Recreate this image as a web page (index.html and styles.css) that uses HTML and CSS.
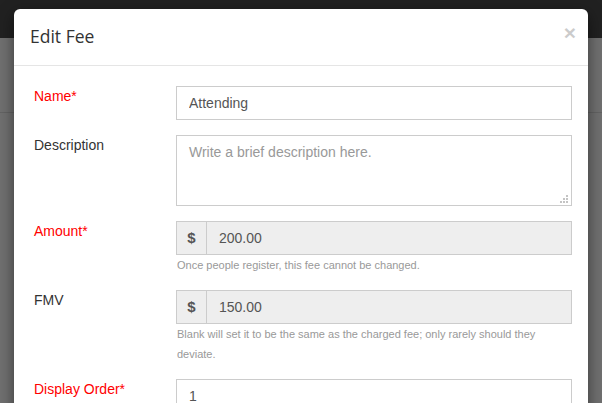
FILE: index.html
```html
<!DOCTYPE html>
<html lang="en">
<head>
<meta charset="utf-8">
<title>Edit Fee</title>
<link rel="stylesheet" href="styles.css">
</head>
<body>
  <div class="navbar"></div>
  <div class="page">
    <div class="page-row"></div>
  </div>

  <div class="modal">
    <div class="modal-header">
      <h4 class="modal-title">Edit Fee</h4>
      <button class="close" type="button">&times;</button>
    </div>
    <form class="modal-body">
      <div class="form-group">
        <label class="control-label required">Name*</label>
        <div class="control">
          <input class="form-control" type="text" value="Attending">
        </div>
      </div>

      <div class="form-group">
        <label class="control-label">Description</label>
        <div class="control">
          <div class="textarea-wrap">
            <textarea class="form-control textarea" placeholder="Write a brief description here."></textarea>
            <svg class="grip" width="8" height="8" viewBox="0 0 8 8">
              <rect x="6" y="0" width="2" height="2"/>
              <rect x="3" y="3" width="2" height="2"/>
              <rect x="6" y="3" width="2" height="2"/>
              <rect x="0" y="6" width="2" height="2"/>
              <rect x="3" y="6" width="2" height="2"/>
              <rect x="6" y="6" width="2" height="2"/>
            </svg>
          </div>
        </div>
      </div>

      <div class="form-group">
        <label class="control-label required">Amount*</label>
        <div class="control">
          <div class="input-group">
            <span class="addon">$</span>
            <input class="form-control grouped" type="text" value="200.00" readonly>
          </div>
          <p class="help-block">Once people register, this fee cannot be changed.</p>
        </div>
      </div>

      <div class="form-group">
        <label class="control-label">FMV</label>
        <div class="control">
          <div class="input-group">
            <span class="addon">$</span>
            <input class="form-control grouped" type="text" value="150.00" readonly>
          </div>
          <p class="help-block">Blank will set it to be the same as the charged fee; only rarely should they deviate.</p>
        </div>
      </div>

      <div class="form-group">
        <label class="control-label required">Display Order*</label>
        <div class="control">
          <input class="form-control" type="text" value="1">
        </div>
      </div>
    </form>
  </div>
</body>
</html>
```

FILE: styles.css
```css
* {
  box-sizing: border-box;
}

html, body {
  margin: 0;
  width: 602px;
  height: 403px;
  overflow: hidden;
}

body {
  background: #707070;
  font-family: "Liberation Sans", Arial, sans-serif;
  font-size: 14px;
  line-height: 20px;
  color: #333;
  position: relative;
}

/* dimmed page behind the dialog */
.navbar {
  height: 38px;
  background: #212121;
}

.page-row {
  height: 75px;
  border-bottom: 1px solid #636363;
}

/* dialog */
.modal {
  position: absolute;
  top: 9px;
  left: 14px;
  width: 574px;
  height: 440px;
  background: #fff;
  border-radius: 6px;
  box-shadow: 0 5px 15px rgba(0, 0, 0, 0.5);
}

.modal-header {
  height: 57px;
  border-bottom: 1px solid #e5e5e5;
  padding: 0 12px 0 16px;
  display: flex;
  justify-content: space-between;
  align-items: center;
}

.modal-title {
  margin: 0;
  font-family: "Open Sans", "Liberation Sans", sans-serif;
  font-size: 17.5px;
  font-weight: 400;
  color: #333;
  line-height: 24px;
  margin-top: -2px;
}

.close {
  align-self: flex-start;
  margin-top: 13px;
  padding: 0;
  border: 0;
  background: none;
  font-family: "Liberation Sans", Arial, sans-serif;
  font-size: 21px;
  font-weight: 700;
  line-height: 1;
  color: #000;
  opacity: 0.2;
}

.modal-body {
  margin: 0;
  padding: 20px 16px 0 20px;
}

.form-group {
  display: grid;
  grid-template-columns: 142px 396px;
  margin-bottom: 15px;
}

.control-label {
  font-size: 14px;
  line-height: 20px;
  color: #333;
}

.control-label.required {
  color: #f00;
}

.form-control {
  display: block;
  width: 100%;
  height: 34px;
  padding: 6px 12px;
  font-family: "Liberation Sans", Arial, sans-serif;
  font-size: 14px;
  line-height: 20px;
  color: #555;
  background: #fff;
  border: 1px solid #ccc;
  border-radius: 0;
  outline: none;
}

.textarea-wrap {
  position: relative;
}

.textarea {
  height: 71px;
  resize: none;
}

.textarea::placeholder {
  color: #999;
}

.grip {
  position: absolute;
  right: 4px;
  bottom: 3px;
  fill: #c4c4c4;
}

.input-group {
  display: flex;
}

.addon {
  flex: 0 0 30px;
  height: 34px;
  display: flex;
  align-items: center;
  justify-content: center;
  background: #eee;
  border: 1px solid #ccc;
  border-right: 0;
  font-size: 15px;
  font-weight: 700;
  color: #555;
}

.form-control.grouped {
  flex: 1;
  background: #eee;
}

.help-block {
  margin: 0;
  padding-left: 1px;
  font-size: 11px;
  line-height: 20px;
  color: #999;
}
```
